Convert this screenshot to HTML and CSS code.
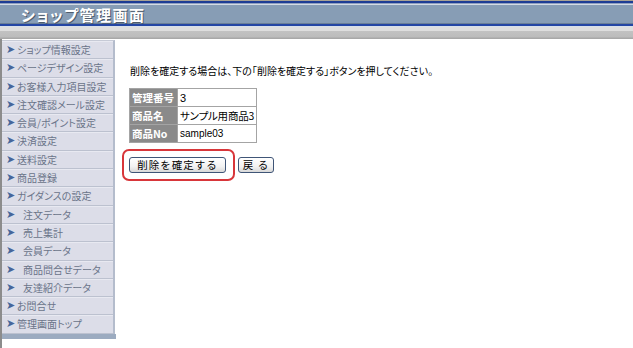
FILE: index.html
```
<!DOCTYPE html>
<html lang="ja">

<head>
    <meta charset="UTF-8">
    <title>ショップ管理画面</title>
    <link rel="stylesheet" href="styles.css">
</head>

<body>
    <div class="header">
        <div class="title-bar"><h1>ショップ管理画面</h1></div>
        <div class="sub-bar"></div>
    </div>
    <div class="main">
        <div class="sidebar">
            <ul class="menu">
                <li><span class="arrow">➤</span>ショップ情報設定</li>
                <li><span class="arrow">➤</span>ページデザイン設定</li>
                <li><span class="arrow">➤</span>お客様入力項目設定</li>
                <li><span class="arrow">➤</span>注文確認メール設定</li>
                <li><span class="arrow">➤</span>会員/ポイント設定</li>
                <li><span class="arrow">➤</span>決済設定</li>
                <li><span class="arrow">➤</span>送料設定</li>
                <li><span class="arrow">➤</span>商品登録</li>
                <li><span class="arrow">➤</span>ガイダンスの設定</li>
                <li class="indent"><span class="arrow">➤</span>注文データ</li>
                <li class="indent"><span class="arrow">➤</span>売上集計</li>
                <li class="indent"><span class="arrow">➤</span>会員データ</li>
                <li class="indent"><span class="arrow">➤</span>商品問合せデータ</li>
                <li class="indent"><span class="arrow">➤</span>友達紹介データ</li>
                <li><span class="arrow">➤</span>お問合せ</li>
                <li><span class="arrow">➤</span>管理画面トップ</li>
            </ul>
            <div class="menu-foot"></div>
        </div>
        <div class="content">
            <p class="notice">削除を確定する場合は、下の「削除を確定する」ボタンを押してください。</p>
            <table class="detail">
                <tr><th>管理番号</th><td>3</td></tr>
                <tr><th>商品名</th><td class="name">サンプル用商品3</td></tr>
                <tr><th>商品No</th><td class="small">sample03</td></tr>
            </table>
            <div class="actions">
                <span class="highlight"><button class="btn btn-wide">削除を確定する</button></span>
                <button class="btn btn-back">戻 る</button>
            </div>
        </div>
    </div>
</body>

</html>
```

FILE: styles.css
```
body {
    margin: 0;
    font-family: "Liberation Sans", "Noto Sans CJK JP", sans-serif;
    background: #fff;
    color: #000;
    font-feature-settings: "palt";
}

.header {
    width: 100%;
}

.title-bar {
    background: #879db5;
    border-top: 1px solid #a8a294;
    box-shadow: inset 0 2px 0 #1d3c94, inset 0 3px 0 #8fa0c0, inset 0 4px 0 #d4dbe4,
        inset 0 -1px 0 #d8e0ea, inset 0 -3px 0 #2446a4, inset 0 -4px 0 #6a7e96;
    height: 26px;
    display: flex;
    align-items: center;
}

h1 {
    margin: 0 0 0 21px;
    padding-top: 1px;
    font-size: 15px;
    letter-spacing: 1.5px;
    color: #fff;
    text-shadow: 1px 1px 0 #4e5c6c;
    font-weight: bold;
}

.sub-bar {
    height: 12px;
    background: linear-gradient(#dedede 0, #dedede 4px, #c2c2c2 4px, #bcbcbc 10px, #a8a8a8 11px);
}

.main {
    display: flex;
    min-height: 309px;
}

.sidebar {
    width: 113px;
    border-left: 2px solid #8c8c8c;
    flex-shrink: 0;
}

.menu {
    list-style: none;
    margin: 1px 0 0;
    padding: 0;
    background: #dcdde8;
    border-right: 2px solid #b4bccc;
    border-top: 1px solid #c6cad6;
}

.menu li {
    height: 17.3px;
    line-height: 17px;
    border-bottom: 1px solid #bcc1cf;
    box-shadow: inset 0 1px 0 #e8e9f1;
    font-size: 10px;
    color: #6a7488;
    white-space: nowrap;
    padding-left: 4px;
    font-family: "Noto Sans CJK JP", sans-serif;
}

.menu li.indent .arrow {
    margin-right: 8px;
}

.arrow {
    color: #46669a;
    font-size: 11px;
    width: 9px;
    margin-right: 2px;
    display: inline-block;
    vertical-align: top;
    font-family: "DejaVu Sans", sans-serif;
}

.menu-foot {
    height: 5px;
    background: #9cabc0;
    margin-right: -1px;
}

.content {
    padding: 26px 0 0 15px;
    flex: 1;
}

.notice {
    margin: 0;
    font-size: 10px;
    line-height: 12px;
    font-family: "Noto Sans CJK JP", sans-serif;
}

.detail {
    margin: 11px 0 0 -1px;
    border-collapse: collapse;
    border: 1px solid #8e8e8e;
}

.detail th,
.detail td {
    border: 1px solid #a4a4a4;
    height: 17px;
    padding: 0 2px;
    text-align: left;
    white-space: nowrap;
}

.detail th {
    background: #8a8a8a;
    color: #fff;
    font-size: 10.5px;
    font-weight: bold;
    width: 43px;
    font-family: "Noto Sans CJK JP", sans-serif;
}

.detail td {
    font-size: 11px;
    width: 70px;
}

.detail td.name {
    font-size: 10.5px;
    letter-spacing: -0.2px;
    font-family: "Noto Sans CJK JP", sans-serif;
}

.detail td.small {
    font-size: 10px;
}

.actions {
    display: flex;
    align-items: center;
    margin-top: 6px;
    margin-left: -8px;
    gap: 3px;
}

.highlight {
    display: inline-flex;
    border: 2px solid #d8363a;
    border-radius: 7px;
    padding: 6px 7px 6px 5px;
}

.btn {
    height: 16px;
    padding: 0 7px;
    font-size: 10.5px;
    font-family: "Noto Sans CJK JP", sans-serif;
    line-height: 14px;
    border: 1px solid #3f5577;
    border-radius: 3px;
    background: linear-gradient(#ffffff, #f2f2f2 60%, #d8d8d8);
    color: #000;
}

.btn-wide {
    width: 97px;
    letter-spacing: 1px;
}

.btn-back {
    width: 36px;
    padding: 0;
    letter-spacing: 1px;
}
```
